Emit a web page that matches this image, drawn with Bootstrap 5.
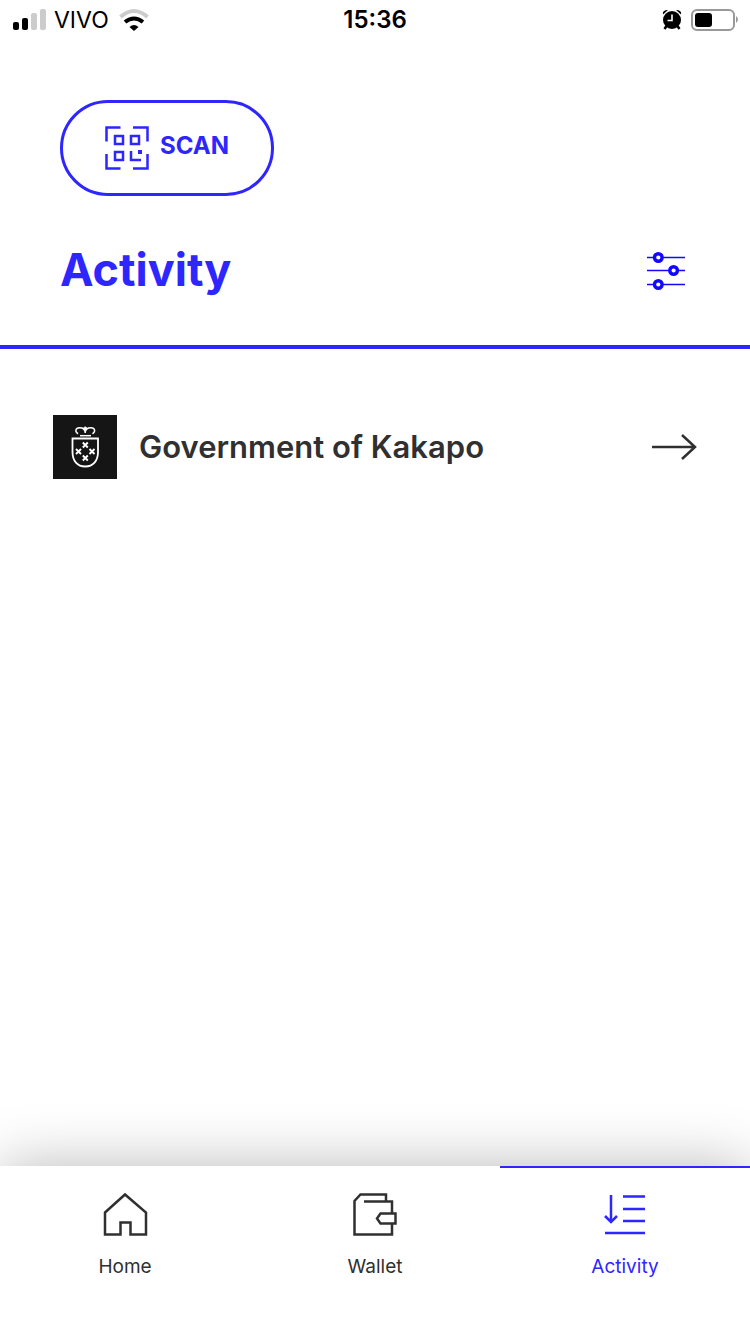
<!DOCTYPE html>
<html lang="en">
<head>
<meta charset="utf-8">
<meta name="viewport" content="width=device-width, initial-scale=1">
<title>Activity</title>
<link href="https://cdn.jsdelivr.net/npm/bootstrap@5.3.0/dist/css/bootstrap.min.css" rel="stylesheet">
<style>
:root { --brand: #2e26ff; --ink: #303030; }
body { font-family: Inter, "Liberation Sans", sans-serif; color: var(--ink); background: #fff; }
svg { display: block; flex: none; fill: none; }
.status-bar { height: 40px; padding: 0 12px; color: #000; line-height: 40px; }
.carrier { font-size: 23px; }
.clock { font-size: 24px; font-weight: 600; }
.page-head { padding: 60px 60px 45px; border-bottom: 4px solid var(--brand); }
.btn-scan { --bs-btn-color: var(--brand); --bs-btn-border-color: var(--brand); --bs-btn-hover-color: #fff; --bs-btn-hover-bg: var(--brand);
  height: 96px; padding: 0 42px; gap: 11px; border-width: 3px; font-size: 24px; font-weight: 700; line-height: 30px; }
.title-row { margin-top: 44px; }
.page-title { font-size: 45px; font-weight: 700; line-height: 60px; color: var(--brand); }
.activity-list { padding-top: 66px; }
.activity-item { padding: 0 53px; color: var(--ink); gap: 22px; }
.org-name { font-size: 31px; font-weight: 600; line-height: 40px; }
.tab-bar { height: 168px; background: #fff; box-shadow: 0 0 60px rgba(0, 0, 0, .28); }
.tab-bar .nav-link { padding: 24px 0 0; border-top: 2px solid transparent; border-radius: 0; color: var(--ink); font-size: 19px; line-height: 28px; gap: 13px; }
.tab-bar .nav-link.active { color: var(--brand); border-color: var(--brand); }
</style>
</head>
<body class="d-flex flex-column min-vh-100 overflow-x-hidden">
<div class="status-bar row g-0 align-items-center">
  <div class="col d-flex align-items-center gap-2">
    <svg width="34" height="22" viewBox="0 0 34 22"><rect x="1" y="13" width="6" height="8" rx="2" fill="#000"/><rect x="10" y="9" width="6" height="12" rx="2" fill="#000"/><rect x="19" y="4" width="6" height="17" rx="2" fill="#ccc"/><rect x="28" y="0" width="6" height="21" rx="2" fill="#ccc"/></svg>
    <span class="carrier">VIVO</span>
    <svg width="32" height="24" viewBox="0 0 32 24"><path d="M3.500 9Q17-3 30.500 9" stroke="#ccc" stroke-width="4"/><path d="M8 14Q17 7 26 14" stroke="#000" stroke-width="4"/><path d="M12.500 19Q17 15 21.500 19L17 23Z" fill="#000"/></svg>
  </div>
  <div class="col-auto clock">15:36</div>
  <div class="col d-flex align-items-center justify-content-end gap-2">
    <svg width="20" height="22" viewBox="0 0 20 22"><circle cx="10" cy="11" r="9" fill="#000"/><path d="M4.500 17l-2 3M15.500 17l2 3" stroke="#000" stroke-width="2.500"/><path d="M1 5.500Q0 1 6 1zM14 1Q20 1 19 5.500z" fill="#000"/><path d="M10 5.500v6H5.500" stroke="#fff" stroke-width="1.600"/></svg>
    <svg width="48" height="24" viewBox="0 0 48 24"><rect x="2" y="2" width="42" height="20" rx="5" stroke="#999" stroke-width="2"/><rect x="5" y="5" width="17" height="14" rx="3" fill="#000"/><path d="M46 8q4 3.500 0 7z" fill="#999"/></svg>
  </div>
</div>

<header class="page-head">
  <button type="button" class="btn btn-outline-primary btn-scan rounded-pill d-inline-flex align-items-center">
    <svg width="44" height="44" viewBox="0 0 44 44" stroke="currentColor" stroke-width="2.500"><path d="M1.500 15.500V1.500H15.500M28 1.500H42.500V15.500M42.500 28V42.500H28M15.500 42.500H1.500V28"/><path d="M10 10h8v8h-8zM26 10h8v8h-8zM10 26h8v8h-8zM26 25v9h10"/><path d="M33 26h4" stroke-width="4"/></svg>
    <span class="pb-1">SCAN</span>
  </button>
  <div class="title-row d-flex align-items-center justify-content-between">
    <h1 class="page-title m-0">Activity</h1>
    <button type="button" class="btn border-0 p-0 me-1" aria-label="Filter activity">
      <svg width="40" height="40" viewBox="0 0 40 40" stroke="#1208ff"><path d="M1 7.500H39M1 20.500H39M1 34.500H39" stroke-width="1.500"/><g fill="#fff" stroke-width="3.400"><circle cx="12.300" cy="7.500" r="3.800"/><circle cx="27.600" cy="20.500" r="3.800"/><circle cx="12.300" cy="34.500" r="3.800"/></g></svg>
    </button>
  </div>
</header>

<main class="activity-list flex-grow-1">
  <a href="#" class="activity-item d-flex align-items-center text-decoration-none">
    <svg width="64" height="64" viewBox="0 0 64 64" stroke="#fff"><path d="M0 0h64v64H0z" fill="#151515" stroke="none"/><path d="M19.500 23.500H45V37C45 46 40 51.500 32.200 51.500S19.500 46 19.500 37Z" stroke-width="1.800"/><path d="M27 20.700H38" stroke-width="1.500"/><path d="M25 18.800C21.500 16.500 22.500 12.800 26.500 12.800C30 12.800 32.200 14 32.200 18C32.200 14 34.500 12.800 38 12.800C42 12.800 43 16.500 39.500 18.800M32.200 11.500V18M30.500 13h3.500" stroke-width="1.400"/><path d="M29.800 27.500l5 5m0-5l-5 5M23 34l5 5m0-5l-5 5M36.500 34l5 5m0-5l-5 5M29.800 40.500l5 5m0-5l-5 5" stroke-width="1.900"/></svg>
    <span class="org-name flex-grow-1">Government of Kakapo</span>
    <svg width="48" height="32" viewBox="0 0 48 32" stroke="currentColor" stroke-width="2.500"><path d="M3 16H46M33 4L46 16L33 28"/></svg>
  </a>
</main>

<nav class="tab-bar nav nav-fill flex-nowrap" aria-label="Main">
  <a href="#" class="nav-link col-4 d-flex flex-column align-items-center">
    <svg width="48" height="48" viewBox="0 0 48 48" stroke="currentColor" stroke-width="2.500"><path d="M4 20.500L24 2.500L45 20.500V42.500H29.500V30.500H19.500V42.500H4Z"/></svg>
    <span>Home</span>
  </a>
  <a href="#" class="nav-link col-4 d-flex flex-column align-items-center">
    <svg width="48" height="48" viewBox="0 0 48 48" stroke="currentColor" stroke-width="2.500"><path d="M35 9V2.500H9.500L3.500 9V42.500H41V32M13 9.500H41V21"/><path d="M44.500 21.500H29.500L26 26.500L29.500 31.500H44.500Z"/></svg>
    <span>Wallet</span>
  </a>
  <a href="#" class="nav-link active col-4 d-flex flex-column align-items-center" aria-current="page">
    <svg width="48" height="48" viewBox="0 0 48 48" stroke="currentColor" stroke-width="2.500"><path d="M10 3V30M4 24L10 30L16 24M22 4.500H44M22 17H44M22 29H44M4 41H44"/></svg>
    <span>Activity</span>
  </a>
</nav>
<script src="https://cdn.jsdelivr.net/npm/bootstrap@5.3.0/dist/js/bootstrap.bundle.min.js"></script>
</body>
</html>
